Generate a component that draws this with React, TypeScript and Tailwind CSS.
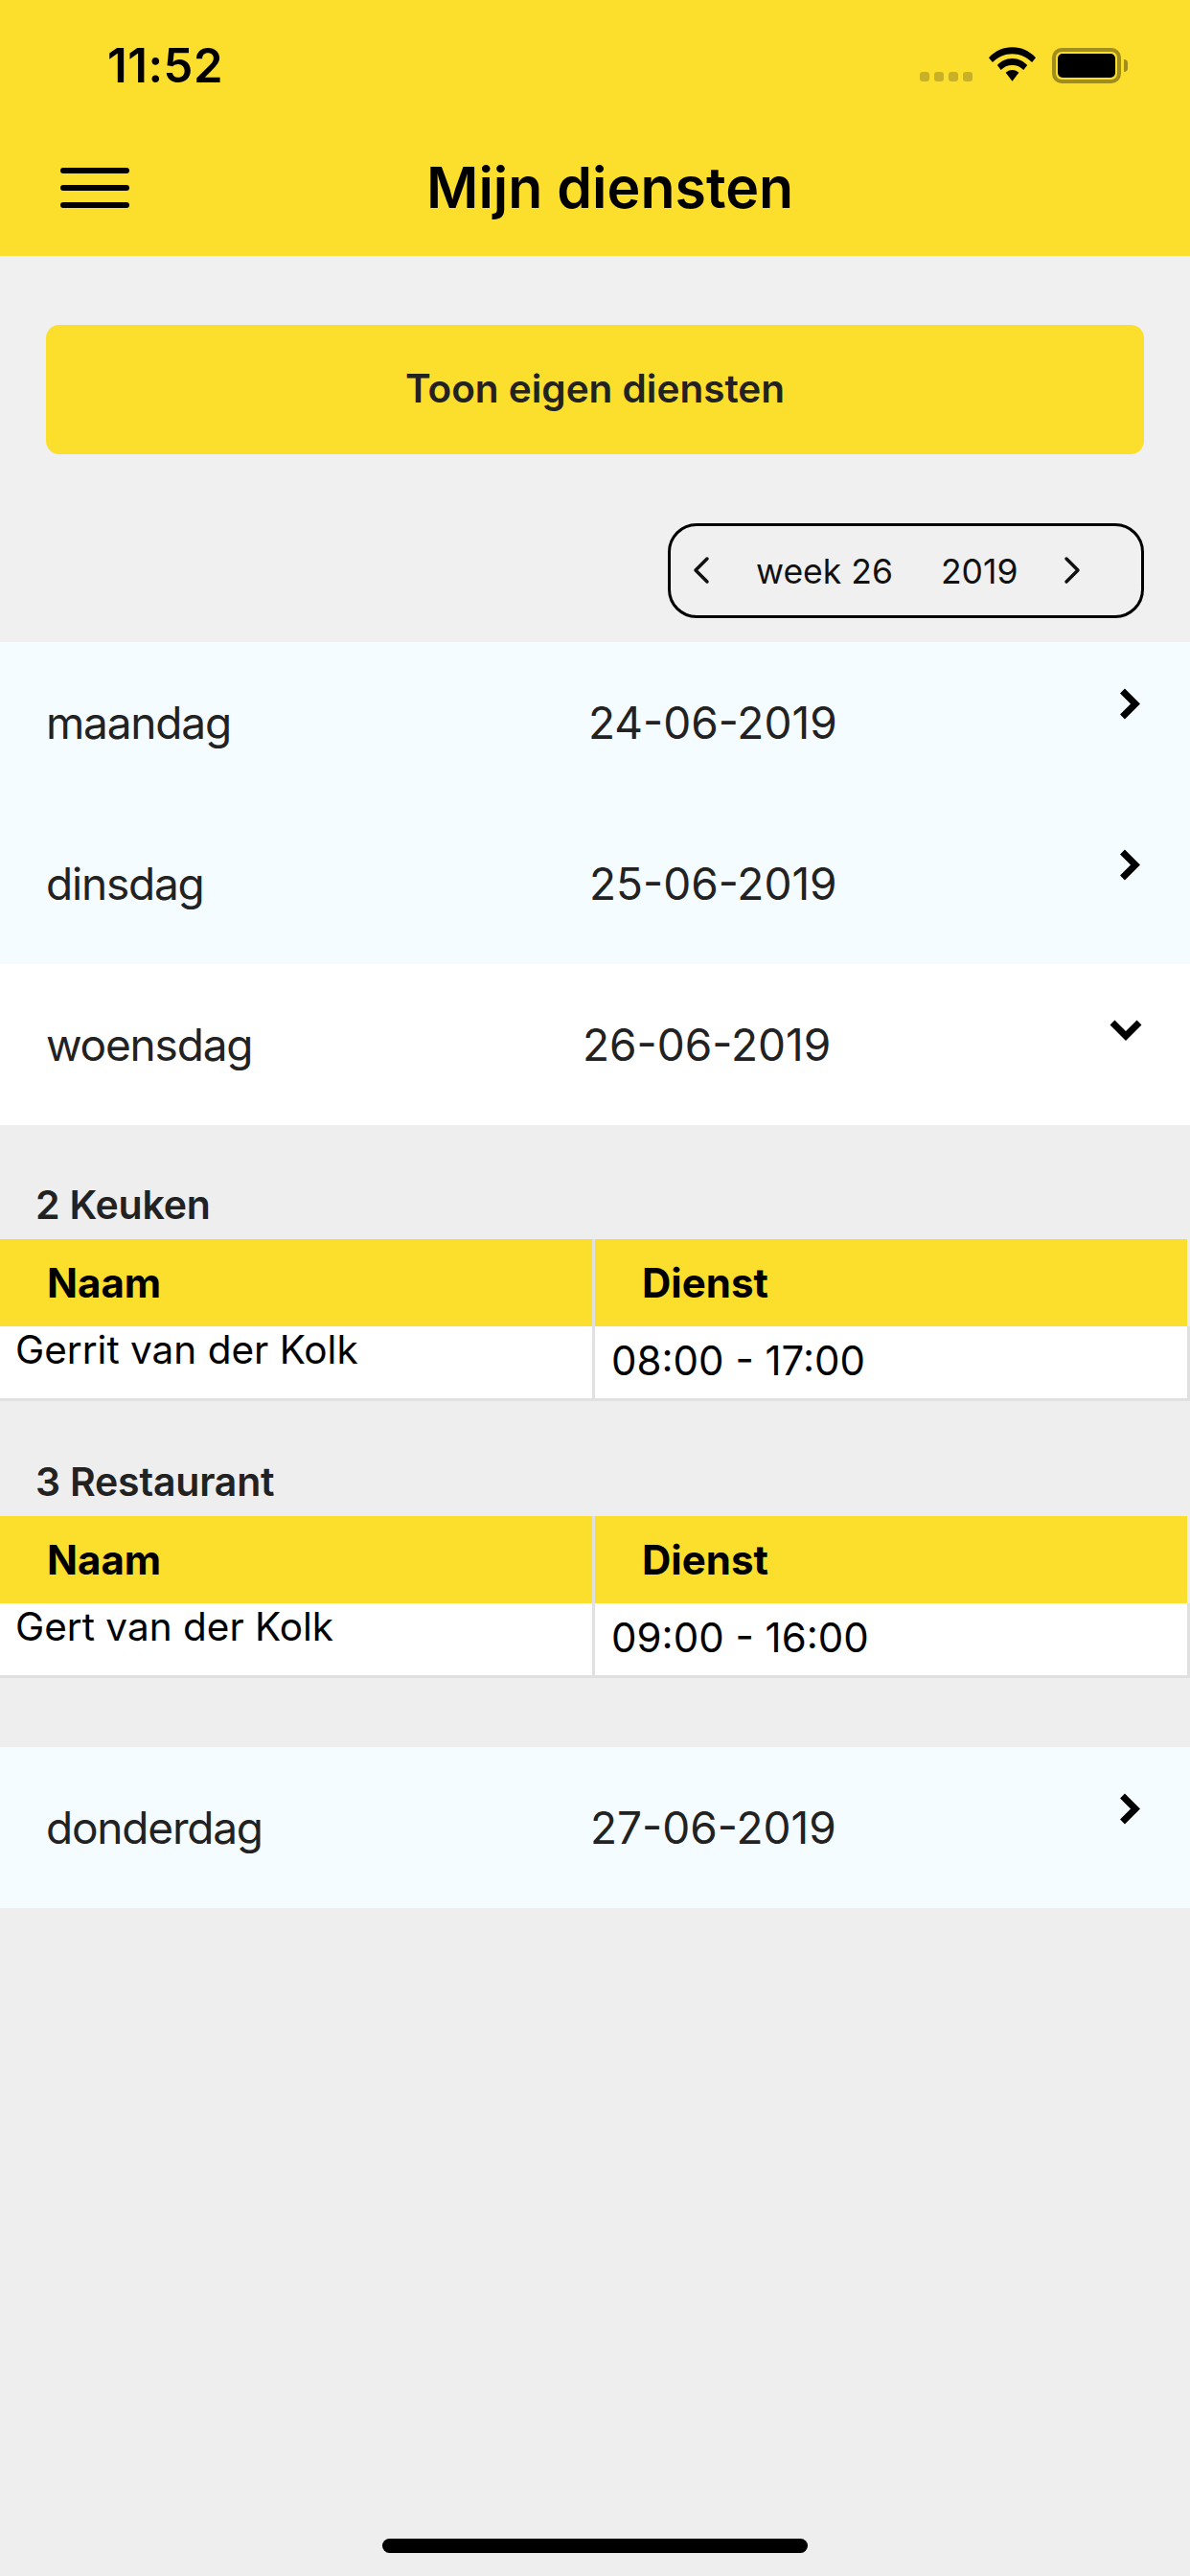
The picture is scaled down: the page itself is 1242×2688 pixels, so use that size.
import { ChevronLeft, ChevronRight } from 'lucide-react';

const yellow = 'bg-[#fcde2d]';

function RowChevron({ open }: { open?: boolean }) {
  if (open) {
    return (
      <svg viewBox="0 0 34 22" className="w-[34px] h-[22px] mt-[58px] ml-auto mr-[50px]">
        <path d="M3 3 L17 17 L31 3" fill="none" stroke="#000" strokeWidth="7" strokeLinejoin="miter" />
      </svg>
    );
  }
  return (
    <svg viewBox="0 0 22 33" className="w-[22px] h-[33px] mt-[48px] ml-auto mr-[52px]">
      <path d="M3.5 3 L17 16.5 L3.5 30" fill="none" stroke="#000" strokeWidth="7" strokeLinejoin="miter" />
    </svg>
  );
}

function DayRow({
  day,
  date,
  dateClass,
  open,
}: {
  day: string;
  date: string;
  dateClass: string;
  open?: boolean;
}) {
  return (
    <div className={`flex h-[168px] pl-[48px] ${open ? 'bg-white' : 'bg-[#f5fcff]'}`}>
      <div className={`flex h-full items-center text-[46px] tracking-[-1.2px] text-[#222] ${dateClass}`}>{day}</div>
      <div className="flex h-full items-center text-[46px] text-[#222]">{date}</div>
      <RowChevron open={open} />
    </div>
  );
}

function ShiftTable({ label, name, shift }: { label: string; name: string; shift: string }) {
  return (
    <div>
      <div className="h-[40px] pl-[37px] flex items-center text-[41px] tracking-[-0.2px] leading-none font-semibold text-[#222]">
        {label}
      </div>
      <div className="flex mt-[16px] h-[91px] pr-[3px]">
        <div className={`w-[618px] ${yellow} pl-[49px] flex items-center text-[42px] font-bold text-black`}>Naam</div>
        <div className="w-[3px] bg-[#e0e0e0]" />
        <div className={`flex-1 ${yellow} pl-[49px] flex items-center text-[42px] font-bold text-black`}>Dienst</div>
      </div>
      <div className="flex h-[75px] bg-white border-b-[3px] border-[#e0e0e0] border-r-[3px] box-content">
        <div className="w-[618px] pl-[16px] pt-[1px] text-[40.5px] leading-[48px] text-black">{name}</div>
        <div className="w-[3px] bg-[#e0e0e0]" />
        <div className="flex-1 pl-[17px] pt-[12px] text-[42px] leading-[48px] text-black">{shift}</div>
      </div>
    </div>
  );
}

export default function App() {
  return (
    <div className="w-[1242px] h-[2688px] bg-[#eeeeee] flex flex-col font-['Inter',sans-serif]">
      <header className={`${yellow} h-[267px] shrink-0`}>
        {/* status bar */}
        <div className="flex items-center h-[68px] mt-[34px] pl-[112px] pr-[65px]">
          <span className="text-[49px] tracking-[0.5px] font-semibold text-black leading-none">11:52</span>
          <div className="ml-auto flex items-center">
            <div className="flex gap-[5px] mt-[24px] mr-[17px]">
              <span className="w-[10px] h-[10px] rounded-[3px] bg-[#c9b127]" />
              <span className="w-[10px] h-[10px] rounded-[3px] bg-[#c9b127]" />
              <span className="w-[10px] h-[10px] rounded-[3px] bg-[#c9b127]" />
              <span className="w-[10px] h-[10px] rounded-[3px] bg-[#c9b127]" />
            </div>
            <svg viewBox="0 0 50 36" className="w-[49px] h-[36px] mr-[17px] -mt-[2px]">
              <path d="M25 0 C15 0 7 4 0 11 L4 16 C10 10 17 7 25 7 C33 7 40 10 46 16 L50 11 C43 4 35 0 25 0 Z" fill="#000" />
              <path d="M25 12 C18 12 13 15 9 19 L13 24 C16 21 20 19 25 19 C30 19 34 21 37 24 L41 19 C37 15 32 12 25 12 Z" fill="#000" />
              <path d="M25 24 C22 24 20 25 18 27 L25 36 L32 27 C30 25 28 24 25 24 Z" fill="#000" />
            </svg>
            <div className="w-[72px] h-[37px] rounded-[10px] border-[4px] border-[#a18d1d] p-[2px]">
              <div className="w-full h-full rounded-[5px] bg-black" />
            </div>
            <div className="w-[4px] h-[13px] ml-[3px] rounded-r-[4px] bg-[#a18d1d]" />
          </div>
        </div>
        {/* nav bar */}
        <div className="flex items-center h-[62px] mt-[63px] pl-[63px]">
          <div className="flex flex-col gap-[12px] w-[72px]">
            <span className="h-[6px] rounded-full bg-black" />
            <span className="h-[6px] rounded-full bg-black" />
            <span className="h-[6px] rounded-full bg-black" />
          </div>
          <h1 className="ml-[310px] -mt-[2px] text-[59px] font-semibold text-black leading-none">Mijn diensten</h1>
        </div>
      </header>

      <div className="px-[48px] pt-[72px] pb-[25px] bg-[#f0f0f0]">
        <div className={`${yellow} h-[135px] rounded-[14px] flex items-center justify-center text-[40.5px] font-semibold text-[#222]`}>
          Toon eigen diensten
        </div>
        <div className="flex justify-end mt-[72px]">
          <div className="flex items-center w-[497px] h-[99px] rounded-[30px] border-[3px] border-black text-[35.5px] text-[#111] pl-[8px]">
            <ChevronLeft className="w-[48px] h-[48px] -mt-[2px]" strokeWidth={1.75} />
            <span className="ml-[33px] pt-[2px]">week 26</span>
            <span className="ml-[50px] pt-[2px]">2019</span>
            <ChevronRight className="ml-[33px] w-[48px] h-[48px] -mt-[2px]" strokeWidth={1.75} />
          </div>
        </div>
      </div>

      <div>
        <DayRow day="maandag" date="24-06-2019" dateClass="w-[566px]" />
        <DayRow day="dinsdag" date="25-06-2019" dateClass="w-[567px]" />
        <DayRow day="woensdag" date="26-06-2019" dateClass="w-[560px]" open />
      </div>

      <div className="mt-[63px]">
        <ShiftTable label="2 Keuken" name="Gerrit van der Kolk" shift="08:00 - 17:00" />
      </div>
      <div className="mt-[64px]">
        <ShiftTable label="3 Restaurant" name="Gert van der Kolk" shift="09:00 - 16:00" />
      </div>

      <div className="mt-[72px]">
        <DayRow day="donderdag" date="27-06-2019" dateClass="w-[568px]" />
      </div>

      <div className="mt-auto mb-[24px] mx-auto w-[444px] h-[15px] rounded-full bg-black" />
    </div>
  );
}
